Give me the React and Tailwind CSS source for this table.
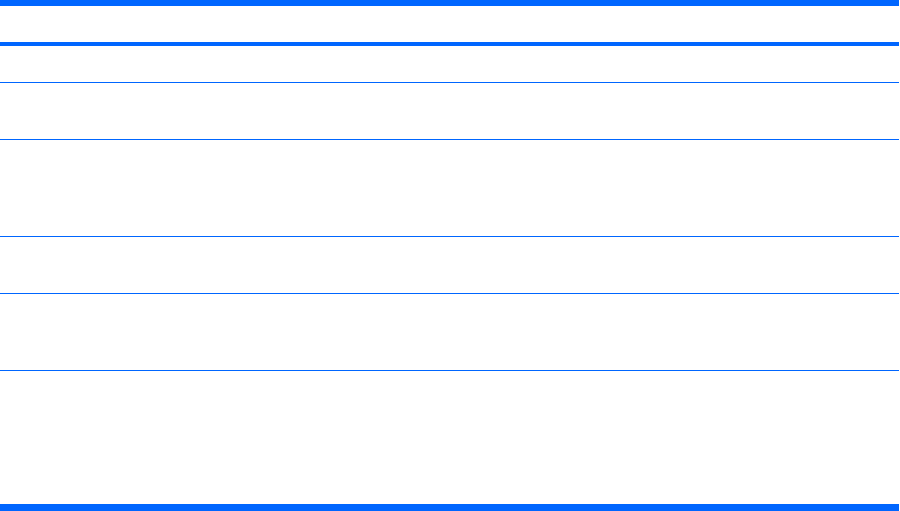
export default function App() {
  const rows = [
    { h: "h-[36px]", b: "border-b-[4px]" },
    { h: "h-[36px]", b: "border-b" },
    { h: "h-[56px]", b: "border-b" },
    { h: "h-[96px]", b: "border-b" },
    { h: "h-[56px]", b: "border-b" },
    { h: "h-[76px]", b: "border-b" },
    { h: "h-[133px]", b: "border-b-[7px]" },
  ];
  return (
    <div className="w-[899px] h-[511px] bg-white overflow-hidden" style={{ fontFamily: '"Liberation Sans", Arial, sans-serif' }}>
      <div className="flex flex-col border-t-[6px] border-[#0066ff]">
        {rows.map((r, i) => (
          <div key={i} className={`${r.h} ${r.b} border-[#0066ff] box-content`} />
        ))}
      </div>
    </div>
  );
}
